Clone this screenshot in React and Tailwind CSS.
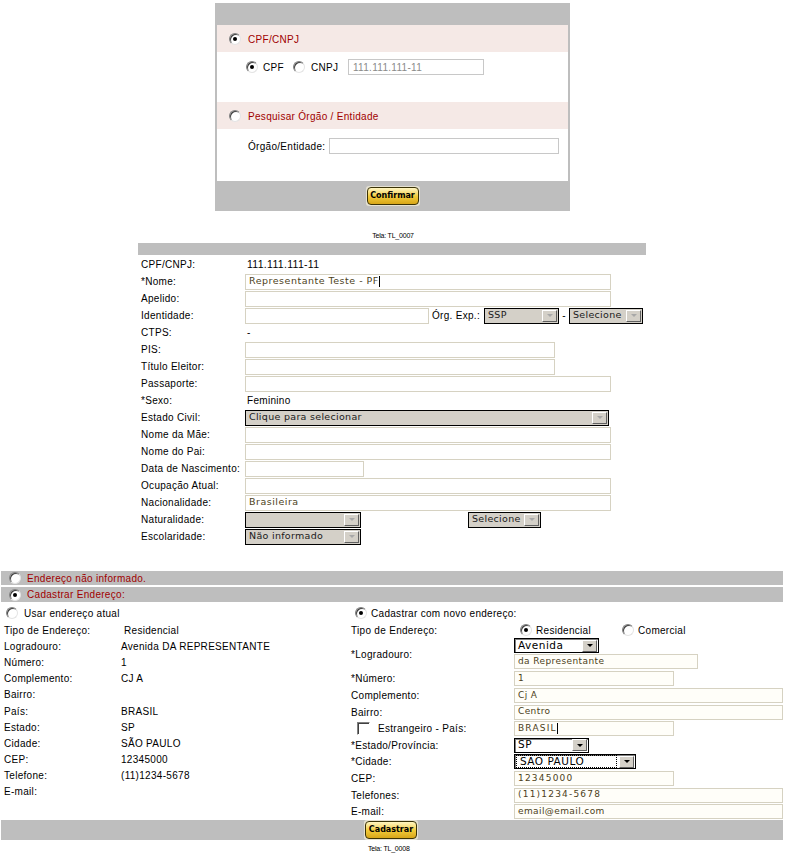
import React from "react";

const SANS = "font-['Liberation_Sans',Arial,sans-serif]";
const FIELD = "font-['DejaVu_Sans',Verdana,sans-serif]";

function Radio({ on }) {
  return (
    <span className="inline-flex w-[12px] h-[12px] shrink-0 items-center justify-center rounded-full border border-t-[#808080] border-l-[#808080] border-b-[#e4e4e4] border-r-[#e4e4e4] bg-white shadow-[inset_1px_1px_0_#404040]">
      {on && <span className="w-[4px] h-[4px] rounded-full bg-black" />}
    </span>
  );
}

function Check() {
  return (
    <span className="inline-block w-[13px] h-[13px] shrink-0 border border-t-[#808080] border-l-[#808080] border-b-white border-r-white bg-white shadow-[inset_1px_1px_0_#404040]" />
  );
}

function Caret() {
  return <span className="inline-block w-px h-[11px] bg-black align-middle" />;
}

function Input({ className = "", children, soft, wide }) {
  return (
    <div
      className={`${className} ${FIELD} flex items-center shrink-0 border border-[#d6d2c2] px-[3px] text-[#4c3f1a] whitespace-nowrap overflow-hidden ${
        soft ? "h-[15px] bg-[#fffef9] text-[9px]" : "h-[16px] bg-white text-[9.5px]"
      } ${wide ? "tracking-[1.2px]" : soft ? "tracking-[0.4px]" : "tracking-[0.5px]"}`}
    >
      {children}
    </div>
  );
}

function Arrow({ dim }) {
  return (
    <span className="flex w-[15px] h-[12px] shrink-0 mr-[1px] items-center justify-center bg-[#d4d0c8] border border-t-white border-l-white border-r-[#606060] border-b-[#606060]">
      <span
        className={`w-0 h-0 border-x-[3px] border-x-transparent border-t-[3px] ${
          dim ? "border-t-[#a8a8a8]" : "border-t-black"
        }`}
      />
    </span>
  );
}

function Select({ className = "", value, white, focus }) {
  return (
    <div
      className={`${className} ${FIELD} flex items-center shrink-0 border border-black whitespace-nowrap ${
        white
          ? "bg-white h-[15px] shadow-[inset_1px_1px_0_#808080] text-[10.5px] tracking-[0.5px] text-black"
          : "bg-[#d4d0c8] h-[16px] text-[9.5px] tracking-[0.3px] text-[#1a1a1a]"
      }`}
    >
      <span
        className={`flex-1 h-full flex items-center pl-[3px] overflow-hidden ${
          focus ? "border border-dotted border-black ml-[1px] mr-[2px]" : ""
        }`}
      >
        {value}
      </span>
      <Arrow dim={!white} />
    </div>
  );
}

function GoldButton({ label }) {
  return (
    <span className="inline-flex p-[1px] bg-[#e6e2d2] rounded-[3px]">
      <button className="h-[18px] w-[52px] rounded-[4px] border border-[#3a3206] bg-gradient-to-b from-[#fff6c0] via-[#f3cd3a] to-[#d7a617] font-['DejaVu_Sans',Verdana,sans-serif] text-[8px] font-bold leading-none text-black tracking-normal">
        {label}
      </button>
    </span>
  );
}

function Row({ label, children }) {
  return (
    <div className="flex h-[17px] items-center">
      <div className="w-[107px] shrink-0 pl-[3px] whitespace-nowrap">{label}</div>
      {children}
    </div>
  );
}

function LeftRow({ label, value, indent }) {
  return (
    <div className="flex h-[16.2px] items-center">
      <div className="w-[120px] shrink-0 pl-[3px]">{label}</div>
      <div className={indent ? "pl-[3px]" : ""}>{value}</div>
    </div>
  );
}

function RightRow({ label, children, tall }) {
  return (
    <div className={`flex items-center ${tall ? "h-[32px]" : "h-[16.6px]"}`}>
      <div className="w-[163px] shrink-0 whitespace-nowrap">{label}</div>
      {children}
    </div>
  );
}

export default function App() {
  return (
    <div className={`w-[786px] min-h-[858px] bg-white ${SANS} text-[10px] tracking-[0.3px] text-black`}>
      {/* Painel de pesquisa */}
      <div className="ml-[215px] mt-[3px] w-[355px] bg-[#bebebe] px-[2px]">
        <div className="h-[22px]" />
        <div className="h-[27px] bg-[#f5e9e6] flex items-center pl-[12px] gap-[7px] pt-[1px]">
          <Radio on />
          <span className="text-[#a00000]">CPF/CNPJ</span>
        </div>
        <div className="h-[50px] bg-white pt-[7px] pl-[29px]">
          <div className="flex h-[16px] items-center">
            <Radio on />
            <span className="ml-[5px] w-[30px]">CPF</span>
            <Radio />
            <span className="ml-[6px] w-[37px]">CNPJ</span>
            <div className="w-[136px] h-[16px] border border-[#c8c8c8] bg-white flex items-center pl-[4px] text-[#8a8a8a]">
              111.111.111-11
            </div>
          </div>
        </div>
        <div className="h-[27px] bg-[#f5e9e6] flex items-center pl-[12px] gap-[7px] pt-[1px]">
          <Radio />
          <span className="text-[#a00000]">Pesquisar Órgão / Entidade</span>
        </div>
        <div className="h-[52px] bg-white pt-[9px] pl-[31px]">
          <div className="flex h-[16px] items-center">
            <span className="w-[81px]">Órgão/Entidade:</span>
            <div className="w-[230px] h-[16px] border border-[#c8c8c8] bg-white" />
          </div>
        </div>
        <div className="h-[30px] flex items-center justify-center">
          <GoldButton label="Confirmar" />
        </div>
      </div>

      <div className="h-[32px] flex items-end justify-center pb-[2px] text-[7px] tracking-[-0.2px]">
        Tela: TL_0007
      </div>

      {/* Dados do representante */}
      <div className="ml-[138px] w-[508px]">
        <div className="h-[12px] bg-[#bebebe]" />
        <div className="pt-[1px]">
          <Row label="CPF/CNPJ:">
            <span className="pl-[2px] text-[10.5px]">111.111.111-11</span>
          </Row>
          <Row label="*Nome:">
            <Input className="w-[366px]">
              Representante Teste - PF
              <Caret />
            </Input>
          </Row>
          <Row label="Apelido:">
            <Input className="w-[366px]" />
          </Row>
          <Row label="Identidade:">
            <Input className="w-[184px]" />
            <span className="ml-[3px] w-[52px] whitespace-nowrap">Órg. Exp.:</span>
            <Select className="w-[75px]" value="SSP" />
            <span className="w-[10px] text-center">-</span>
            <Select className="w-[74px]" value="Selecione" />
          </Row>
          <Row label="CTPS:">
            <span className="pl-[2px]">-</span>
          </Row>
          <Row label="PIS:">
            <Input className="w-[310px]" />
          </Row>
          <Row label="Título Eleitor:">
            <Input className="w-[310px]" />
          </Row>
          <Row label="Passaporte:">
            <Input className="w-[366px]" />
          </Row>
          <Row label="*Sexo:">
            <span className="pl-[2px]">Feminino</span>
          </Row>
          <Row label="Estado Civil:">
            <Select className="w-[364px]" value="Clique para selecionar" />
          </Row>
          <Row label="Nome da Mãe:">
            <Input className="w-[366px]" />
          </Row>
          <Row label="Nome do Pai:">
            <Input className="w-[366px]" />
          </Row>
          <Row label="Data de Nascimento:">
            <Input className="w-[119px]" />
          </Row>
          <Row label="Ocupação Atual:">
            <Input className="w-[366px]" />
          </Row>
          <Row label="Nacionalidade:">
            <Input className="w-[366px]">Brasileira</Input>
          </Row>
          <Row label="Naturalidade:">
            <Select className="w-[116px]" value="" />
            <span className="w-[107px]" />
            <Select className="w-[73px]" value="Selecione" />
          </Row>
          <Row label="Escolaridade:">
            <Select className="w-[116px]" value="Não informado" />
          </Row>
        </div>
      </div>

      {/* Endereço */}
      <div className="ml-[1px] mt-[26px] w-[782px]">
        <div className="h-[14px] bg-[#bebebe] flex items-center pl-[8px] gap-[6px]">
          <Radio />
          <span className="text-[#a00000]">Endereço não informado.</span>
        </div>
        <div className="mt-[2px] h-[15px] bg-[#bebebe] flex items-center pl-[8px] gap-[6px]">
          <Radio on />
          <span className="text-[#a00000]">Cadastrar Endereço:</span>
        </div>

        <div className="flex">
          <div className="w-[349px] shrink-0">
            <div className="flex h-[20px] items-center pl-[5px] gap-[6px] pt-[2px]">
              <Radio />
              <span>Usar endereço atual</span>
            </div>
            <LeftRow label="Tipo de Endereço:" value="Residencial" indent />
            <LeftRow label="Logradouro:" value="Avenida DA REPRESENTANTE" />
            <LeftRow label="Número:" value="1" />
            <LeftRow label="Complemento:" value="CJ A" />
            <LeftRow label="Bairro:" value="" />
            <LeftRow label="País:" value="BRASIL" />
            <LeftRow label="Estado:" value="SP" />
            <LeftRow label="Cidade:" value="SÃO PAULO" />
            <LeftRow label="CEP:" value="12345000" />
            <LeftRow label="Telefone:" value="(11)1234-5678" />
            <LeftRow label="E-mail:" value="" />
          </div>

          <div className="flex-1 pl-[1px]">
            <div className="flex h-[20px] items-center pl-[4px] gap-[4px] pt-[2px]">
              <Radio on />
              <span>Cadastrar com novo endereço:</span>
            </div>
            <RightRow label="Tipo de Endereço:">
              <span className="ml-[6px] flex items-center gap-[4px] w-[102px]">
                <Radio on />
                Residencial
              </span>
              <span className="flex items-center gap-[4px]">
                <Radio />
                Comercial
              </span>
            </RightRow>
            <RightRow label="*Logradouro:" tall>
              <div className="flex flex-col gap-[1px] -mt-[2px]">
                <Select className="w-[85px]" value="Avenida" white />
                <Input className="w-[184px]" soft>da Representante</Input>
              </div>
            </RightRow>
            <RightRow label="*Número:">
              <Input className="w-[160px]" soft>1</Input>
            </RightRow>
            <RightRow label="Complemento:">
              <Input className="w-[269px]" soft>Cj A</Input>
            </RightRow>
            <RightRow label="Bairro:">
              <Input className="w-[269px]" soft>Centro</Input>
            </RightRow>
            <RightRow
              label={
                <span className="flex items-center pl-[6px] gap-[8px]">
                  <Check />
                  Estrangeiro - País:
                </span>
              }
            >
              <Input className="w-[160px]" soft wide>
                BRASIL
                <Caret />
              </Input>
            </RightRow>
            <RightRow label="*Estado/Província:">
              <Select className="w-[75px]" value="SP" white />
            </RightRow>
            <RightRow label="*Cidade:">
              <Select className="w-[122px]" value="SÃO PAULO" white focus />
            </RightRow>
            <RightRow label="CEP:">
              <Input className="w-[160px]" soft wide>12345000</Input>
            </RightRow>
            <RightRow label="Telefones:">
              <Input className="w-[269px]" soft wide>(11)1234-5678</Input>
            </RightRow>
            <RightRow label="E-mail:">
              <Input className="w-[269px]" soft>email@email.com</Input>
            </RightRow>
          </div>
        </div>

        <div className="h-[20px] bg-[#bebebe] flex items-center pl-[363px]">
          <GoldButton label="Cadastrar" />
        </div>
        <div className="h-[19px] flex items-center pl-[367px] text-[7px] tracking-[-0.2px]">
          Tela: TL_0008
        </div>
      </div>
    </div>
  );
}
